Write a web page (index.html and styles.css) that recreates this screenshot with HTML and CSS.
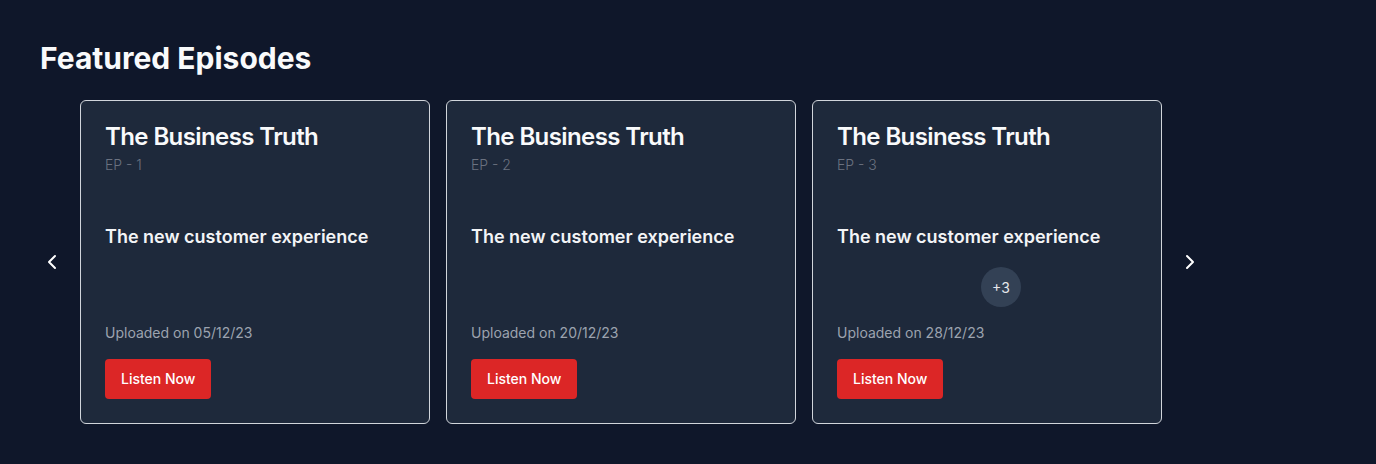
FILE: index.html
```html
<!DOCTYPE html>
<html lang="en">
<head>
<meta charset="utf-8">
<title>Featured Episodes</title>
<link rel="stylesheet" href="styles.css">
</head>
<body>
<section class="featured">
  <h2 class="featured-title">Featured Episodes</h2>
  <div class="carousel">
    <button class="nav-btn" aria-label="Previous">
      <svg width="24" height="24" viewBox="0 0 24 24" fill="none" stroke="#fff" stroke-width="2" stroke-linecap="round" stroke-linejoin="round"><path d="M15 18l-6-6 6-6"/></svg>
    </button>
    <div class="cards">
      <article class="card">
        <h3 class="card-title">The Business Truth</h3>
        <p class="card-ep">EP - 1</p>
        <p class="card-desc">The new customer experience</p>
        <div class="avatars"></div>
        <p class="card-date">Uploaded on 05/12/23</p>
        <button class="listen-btn">Listen Now</button>
      </article>
      <article class="card">
        <h3 class="card-title">The Business Truth</h3>
        <p class="card-ep">EP - 2</p>
        <p class="card-desc">The new customer experience</p>
        <div class="avatars"></div>
        <p class="card-date">Uploaded on 20/12/23</p>
        <button class="listen-btn">Listen Now</button>
      </article>
      <article class="card">
        <h3 class="card-title">The Business Truth</h3>
        <p class="card-ep">EP - 3</p>
        <p class="card-desc">The new customer experience</p>
        <div class="avatars"><span class="more">+3</span></div>
        <p class="card-date">Uploaded on 28/12/23</p>
        <button class="listen-btn">Listen Now</button>
      </article>
    </div>
    <button class="nav-btn" aria-label="Next">
      <svg width="24" height="24" viewBox="0 0 24 24" fill="none" stroke="#fff" stroke-width="2" stroke-linecap="round" stroke-linejoin="round"><path d="M9 18l6-6-6-6"/></svg>
    </button>
  </div>
</section>
</body>
</html>
```
FILE: styles.css
```css
* { box-sizing: border-box; }
html, body {
  margin: 0;
  padding: 0;
  background: #0f172a;
  font-family: Inter, "Noto Sans", sans-serif;
  color: #fff;
}
.featured {
  padding: 40px;
}
.featured-title {
  margin: 0 0 24px;
  font-size: 30px;
  line-height: 36px;
  font-weight: 700;
  color: #f9fafb;
}
.carousel {
  display: flex;
  align-items: center;
  gap: 16px;
}
.nav-btn {
  width: 24px;
  height: 24px;
  padding: 0;
  border: 0;
  background: none;
  display: flex;
  align-items: center;
  justify-content: center;
  cursor: pointer;
}
.cards {
  display: flex;
  gap: 16px;
}
.card {
  width: 350px;
  background: #1e293b;
  border: 1px solid #d1d5db;
  border-radius: 6px;
  padding: 20px 24px 24px;
  display: flex;
  flex-direction: column;
  align-items: flex-start;
}
.card-title {
  margin: 0;
  font-size: 24px;
  line-height: 32px;
  font-weight: 600;
  letter-spacing: -0.025em;
  color: #f9fafb;
}
.card-ep {
  margin: 2px 0 0;
  font-size: 14px;
  line-height: 20px;
  font-weight: 300;
  color: #6b7280;
}
.card-desc {
  margin: 48px 0 0;
  font-size: 18px;
  line-height: 28px;
  font-weight: 600;
  color: #f3f4f6;
}
.avatars {
  margin-top: 16px;
  height: 40px;
  width: 100%;
  display: flex;
}
.more {
  margin-left: 144px;
  width: 40px;
  height: 40px;
  border-radius: 50%;
  background: #334155;
  color: #e5e7eb;
  font-size: 14px;
  display: flex;
  align-items: center;
  justify-content: center;
}
.card-date {
  margin: 16px 0 0;
  font-size: 14px;
  line-height: 20px;
  color: #9ca3af;
}
.listen-btn {
  margin-top: 16px;
  height: 40px;
  padding: 0 16px 2px;
  border: 0;
  border-radius: 4px;
  background: #dc2626;
  color: #fff;
  font-family: inherit;
  font-size: 14px;
  font-weight: 500;
  cursor: pointer;
}
```
